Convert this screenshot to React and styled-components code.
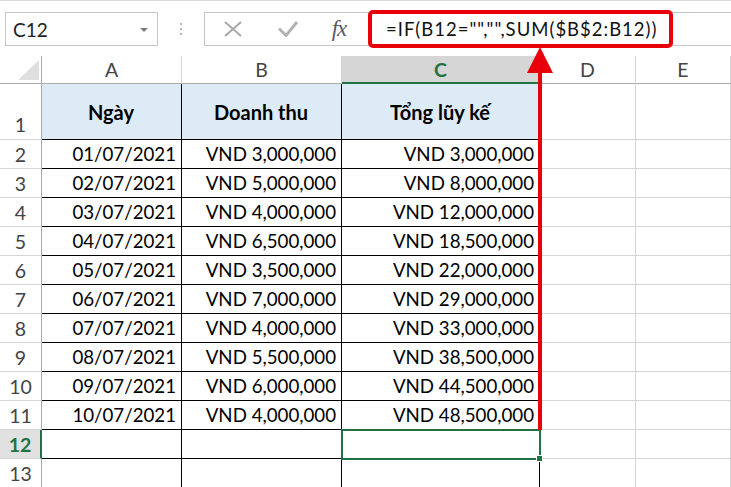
import React from 'react';
import styled, { createGlobalStyle } from 'styled-components';

const GlobalStyle = createGlobalStyle`
    html, body {
        margin:0;
        padding:0;
        background:#fff;
    }
    body {
        font-family:Lato, "Open Sans", sans-serif;
        overflow:hidden;
    }
`;

const Page = styled.div`
    position:relative;
    width:731px;
    height:487px;
    overflow:hidden;
    background:#fff;
`;

const Toolbar = styled.div`
    height:56px;
    box-sizing:border-box;
    border-top:1px solid #d9d9d9;
    padding-top:11px;
    display:flex;
    align-items:flex-start;
`;

const NameBox = styled.div`
    margin-left:5px;
    width:153px;
    height:34px;
    box-sizing:border-box;
    border:1px solid #c6c6c6;
    display:flex;
    align-items:center;
    justify-content:space-between;
    padding:0 9px 0 7px;
    font-size:19px;
    color:#222;
`;

const DropArrow = styled.span`
    width:0;
    height:0;
    border-left:4px solid transparent;
    border-right:4px solid transparent;
    border-top:4px solid #7a7a7a;
    margin-top:2px;
`;

const Grip = styled.div`
    width:46px;
    height:34px;
    display:flex;
    flex-direction:column;
    align-items:center;
    justify-content:center;
    gap:3px;

    & > i {
        width:2px;
        height:2px;
        background:#b5b5b5;
    }
`;

const FormulaBox = styled.div`
    flex:1;
    height:34px;
    box-sizing:border-box;
    border:1px solid #c6c6c6;
    border-right:none;
    display:flex;
    align-items:center;
`;

const IconSlot = styled.div`
    width:${p => p.$w}px;
    height:100%;
    display:flex;
    align-items:center;
    justify-content:center;
`;

const Fx = styled.span`
    font-family:"Liberation Serif", serif;
    font-style:italic;
    font-size:23px;
    color:#5a5a5a;
    letter-spacing:-1px;
    margin-left:-4px;
`;

const FormulaText = styled.span`
    margin-left:19px;
    font-size:18.5px;
    letter-spacing:1px;
    color:#111;
    white-space:nowrap;
`;

const Sheet = styled.div`
    display:grid;
    grid-template-columns:42px 140px 160px 198px 96px 95px;
    grid-template-rows:28px 56px repeat(12, 29px);
    font-size:18.7px;
`;

const Corner = styled.div`
    position:relative;
    border-right:1px solid #ababab;
    border-bottom:1px solid #ababab;

    &::after {
        content:'';
        position:absolute;
        right:2px;
        bottom:3px;
        width:0;
        height:0;
        border-left:21px solid transparent;
        border-bottom:20px solid #dfdfdf;
    }
`;

const ColHead = styled.div`
    display:flex;
    align-items:center;
    justify-content:center;
    font-size:19.5px;
    background:${p => p.$active ? '#d6d6d6' : '#fff'};
    color:${p => p.$active ? '#217346' : '#444'};
    font-weight:${p => p.$active ? 700 : 400};
    border-right:1px solid #d4d4d4;
    border-bottom:${p => p.$active ? '2px solid #217346' : '1px solid #ababab'};
`;

const RowHead = styled.div`
    display:flex;
    align-items:${p => p.$tall ? 'flex-end' : 'center'};
    justify-content:center;
    font-size:19.5px;
    padding-bottom:${p => p.$tall ? '3px' : '0'};
    background:${p => p.$active ? '#e1e1e1' : '#fff'};
    color:${p => p.$active ? '#217346' : '#444'};
    font-weight:${p => p.$active ? 700 : 400};
    border-right:${p => p.$active ? '2px solid #217346' : '1px solid #ababab'};
    border-bottom:1px solid #d4d4d4;
`;

const Cell = styled.div`
    position:relative;
    display:flex;
    align-items:center;
    justify-content:${p => p.$align === 'right' ? 'flex-end' : p.$align === 'center' ? 'center' : 'flex-start'};
    padding:0 5px 0 4px;
    background:${p => p.$head ? '#ddebf7' : '#fff'};
    font-weight:${p => p.$head ? 700 : 400};
    font-size:${p => p.$head ? '20px' : 'inherit'};
    color:#000;
    white-space:nowrap;
    border-right:1px solid ${p => p.$ruled ? '#000' : '#d4d4d4'};
    border-bottom:1px solid ${p => p.$ruled ? '#000' : '#d4d4d4'};
`;

const Selected = styled(Cell)`
    z-index:2;
    outline:2px solid #217346;
    outline-offset:-1px;

    &::after {
        content:'';
        position:absolute;
        right:-4px;
        bottom:-4px;
        width:5px;
        height:5px;
        background:#217346;
        border:1px solid #fff;
    }
`;

const Overlay = styled.svg`
    position:absolute;
    left:0;
    top:0;
    pointer-events:none;
    z-index:5;
`;

const rows = [
    ['01/07/2021', 'VND 3,000,000', 'VND 3,000,000'],
    ['02/07/2021', 'VND 5,000,000', 'VND 8,000,000'],
    ['03/07/2021', 'VND 4,000,000', 'VND 12,000,000'],
    ['04/07/2021', 'VND 6,500,000', 'VND 18,500,000'],
    ['05/07/2021', 'VND 3,500,000', 'VND 22,000,000'],
    ['06/07/2021', 'VND 7,000,000', 'VND 29,000,000'],
    ['07/07/2021', 'VND 4,000,000', 'VND 33,000,000'],
    ['08/07/2021', 'VND 5,500,000', 'VND 38,500,000'],
    ['09/07/2021', 'VND 6,000,000', 'VND 44,500,000'],
    ['10/07/2021', 'VND 4,000,000', 'VND 48,500,000'],
];

const App = () => {
    return <Page>
        <GlobalStyle />
        <Toolbar>
            <NameBox>
                <span>C12</span>
                <DropArrow />
            </NameBox>
            <Grip><i /><i /><i /></Grip>
            <FormulaBox>
                <IconSlot $w={56}>
                    <svg width="18" height="16" viewBox="0 0 18 16">
                        <path d="M1 1 L17 15 M17 1 L1 15" stroke="#a8a8a8" strokeWidth="2" fill="none" />
                    </svg>
                </IconSlot>
                <IconSlot $w={54}>
                    <svg width="20" height="16" viewBox="0 0 20 16">
                        <path d="M1 7.5 L8 14.5 L19 1" stroke="#b3b3b3" strokeWidth="3" fill="none" />
                    </svg>
                </IconSlot>
                <IconSlot $w={52}>
                    <Fx>fx</Fx>
                </IconSlot>
                <FormulaText>=IF(B12="","",SUM($B$2:B12))</FormulaText>
            </FormulaBox>
        </Toolbar>
        <Sheet>
            <Corner />
            <ColHead>A</ColHead>
            <ColHead>B</ColHead>
            <ColHead $active>C</ColHead>
            <ColHead>D</ColHead>
            <ColHead>E</ColHead>

            <RowHead $tall>1</RowHead>
            <Cell $ruled $head $align="center">Ngày</Cell>
            <Cell $ruled $head $align="center">Doanh thu</Cell>
            <Cell $ruled $head $align="center">Tổng lũy kế</Cell>
            <Cell />
            <Cell />

            {rows.map((r, i) => <React.Fragment key={i}>
                <RowHead>{i + 2}</RowHead>
                <Cell $ruled $align="right">{r[0]}</Cell>
                <Cell $ruled $align="right">{r[1]}</Cell>
                <Cell $ruled $align="right">{r[2]}</Cell>
                <Cell />
                <Cell />
            </React.Fragment>)}

            <RowHead $active>12</RowHead>
            <Cell $ruled />
            <Cell $ruled />
            <Selected $ruled />
            <Cell />
            <Cell />

            <RowHead>13</RowHead>
            <Cell $ruled />
            <Cell $ruled />
            <Cell $ruled />
            <Cell />
            <Cell />
        </Sheet>
        <Overlay width="731" height="487">
            <rect x="370" y="12" width="301" height="34" rx="3" fill="none" stroke="#e8000b" strokeWidth="4" />
            <polygon points="540,47 527,73 553,73" fill="#e8000b" />
            <rect x="538" y="72" width="4" height="358" fill="#e8000b" />
        </Overlay>
    </Page>
}

export default App;
